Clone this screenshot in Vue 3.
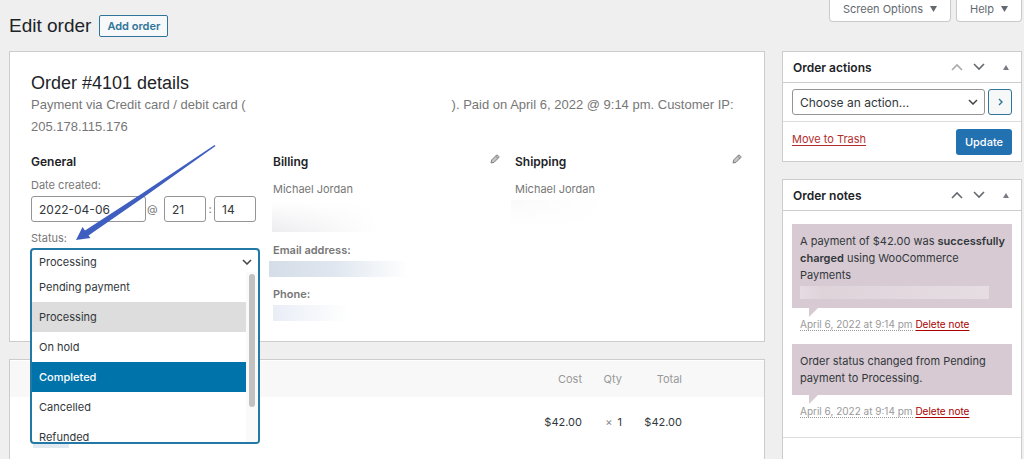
<script setup>
import { ref } from 'vue'

const statuses = ['Pending payment', 'Processing', 'On hold', 'Completed', 'Cancelled', 'Refunded']
const status = ref('Processing')
const highlighted = ref('Completed')
const date = ref('2022-04-06')
const hour = ref('21')
const minute = ref('14')
</script>

<template>
  <div class="page">
    <nav class="screen-meta" aria-label="Screen">
      <button type="button" class="meta-tab">Screen Options
        <svg width="7" height="6" viewBox="0 0 7 6"><path d="M0 0h7L3.500 6z" fill="currentColor" /></svg>
      </button>
      <button type="button" class="meta-tab">Help
        <svg width="7" height="6" viewBox="0 0 7 6"><path d="M0 0h7L3.500 6z" fill="currentColor" /></svg>
      </button>
    </nav>
    <div class="columns">
      <main class="main">
        <header class="page-head">
          <h1>Edit order</h1>
          <a href="#" class="add-order">Add order</a>
        </header>

        <section class="panel order">
          <h2>Order #4101 details</h2>
          <p class="payment">Payment via Credit card / debit card (<span class="redacted"></span>). Paid on April 6, 2022 @ 9:14 pm. Customer IP: 205.178.115.176</p>

          <div class="details">
            <div class="general">
              <h3>General</h3>
              <label class="field-label" for="order-date">Date created:</label>
              <div class="date-row">
                <input id="order-date" v-model="date" class="date">
                <span class="at">@</span>
                <input v-model="hour" class="time" aria-label="Hour">
                <span class="colon">:</span>
                <input v-model="minute" class="time" aria-label="Minute">
              </div>
              <label class="field-label status-label" for="order-status">Status:</label>
              <div class="status-slot">
                <div class="status-combo">
                  <div class="select-wrap">
                    <select id="order-status" v-model="status">
                      <option v-for="s in statuses" :key="s">{{ s }}</option>
                    </select>
                    <svg class="chevron" width="10" height="6" viewBox="0 0 10 6"><path d="M1 1l4 4 4-4" /></svg>
                  </div>
                  <div class="menu">
                    <ul role="listbox" aria-label="Status">
                      <li
                        v-for="s in statuses" :key="s" role="option"
                        :aria-selected="s === status"
                        :class="{ selected: s === status, highlighted: s === highlighted }"
                        @mouseenter="highlighted = s" @click="status = s"
                      >{{ s }}</li>
                    </ul>
                    <div class="track"><div class="thumb"></div></div>
                  </div>
                </div>
              </div>
            </div>

            <div class="address">
              <div class="address-head">
                <h3>Billing</h3>
                <a href="#" class="edit" aria-label="Edit billing">
                  <svg width="10" height="10" viewBox="0 0 10 10"><path d="M1 9l.6-3L6.300 1.300Q7 .6 7.700 1.300L8.700 2.300Q9.400 3 8.700 3.700L4 8.400z" fill="#c4c4c4" stroke="#777" stroke-width=".9" /><path d="M5.600 2L8 4.400" stroke="#777" stroke-width=".8" /></svg>
                </a>
              </div>
              <p class="name">Michael Jordan</p>
              <div class="blur blur-address"></div>
              <h4>Email address:</h4>
              <div class="blur blur-email"></div>
              <h4>Phone:</h4>
              <div class="blur blur-phone"></div>
            </div>

            <div class="address">
              <div class="address-head">
                <h3>Shipping</h3>
                <a href="#" class="edit" aria-label="Edit shipping">
                  <svg width="10" height="10" viewBox="0 0 10 10"><path d="M1 9l.6-3L6.300 1.300Q7 .6 7.700 1.300L8.700 2.300Q9.400 3 8.700 3.700L4 8.400z" fill="#c4c4c4" stroke="#777" stroke-width=".9" /><path d="M5.600 2L8 4.400" stroke="#777" stroke-width=".8" /></svg>
                </a>
              </div>
              <p class="name">Michael Jordan</p>
              <div class="blur blur-shipping"></div>
            </div>
          </div>

          <svg class="arrow" width="140" height="98" viewBox="0 0 140 98">
            <path d="M138.500 0L139.500 1L68 52L12.500 90.500L14.500 93L0 95L6.500 82L9 85.500L66 48.500z" fill="#3f5fc0" />
          </svg>
        </section>

        <section class="panel items">
          <table>
            <thead>
              <tr><th class="item"></th><th class="cost">Cost</th><th class="qty">Qty</th><th class="total">Total</th><th class="end"></th></tr>
            </thead>
            <tbody>
              <tr>
                <td class="item"><div class="item-name"></div></td>
                <td class="cost">$42.00</td>
                <td class="qty"><small>×</small> 1</td>
                <td class="total">$42.00</td>
                <td class="end"></td>
              </tr>
            </tbody>
          </table>
        </section>
      </main>

      <aside class="side">
        <section class="panel actions">
          <header class="box-head">
            <h2>Order actions</h2>
            <button type="button" class="handle faded" aria-label="Move up"><svg width="12" height="8" viewBox="0 0 12 8"><path d="M1 7l5-5 5 5" /></svg></button>
            <button type="button" class="handle" aria-label="Move down"><svg width="12" height="8" viewBox="0 0 12 8"><path d="M1 1l5 5 5-5" /></svg></button>
            <button type="button" class="handle toggle" aria-label="Toggle panel"><svg width="6" height="5" viewBox="0 0 6 5"><path d="M3 0l3 5H0z" /></svg></button>
          </header>
          <div class="action-row">
            <div class="select-wrap action-select">
              <select aria-label="Order action"><option>Choose an action...</option></select>
              <svg class="chevron" width="10" height="6" viewBox="0 0 10 6"><path d="M1 1l4 4 4-4" /></svg>
            </div>
            <button type="button" class="go" aria-label="Apply"><svg width="5" height="8" viewBox="0 0 5 8"><path d="M1 1l3 3-3 3" /></svg></button>
          </div>
          <footer class="action-foot">
            <a href="#" class="trash">Move to Trash</a>
            <button type="button" class="update">Update</button>
          </footer>
        </section>

        <section class="panel notes">
          <header class="box-head">
            <h2>Order notes</h2>
            <button type="button" class="handle" aria-label="Move up"><svg width="12" height="8" viewBox="0 0 12 8"><path d="M1 7l5-5 5 5" /></svg></button>
            <button type="button" class="handle" aria-label="Move down"><svg width="12" height="8" viewBox="0 0 12 8"><path d="M1 1l5 5 5-5" /></svg></button>
            <button type="button" class="handle toggle" aria-label="Toggle panel"><svg width="6" height="5" viewBox="0 0 6 5"><path d="M3 0l3 5H0z" /></svg></button>
          </header>
          <ul class="note-list">
            <li>
              <div class="note">
                <p>A payment of $42.00 was <strong>successfully charged</strong> using WooCommerce Payments</p>
                <div class="note-redacted"></div>
              </div>
              <p class="note-meta"><abbr>April 6, 2022 at 9:14 pm</abbr> <a href="#">Delete note</a></p>
            </li>
            <li>
              <div class="note"><p>Order status changed from Pending payment to Processing.</p></div>
              <p class="note-meta"><abbr>April 6, 2022 at 9:14 pm</abbr> <a href="#">Delete note</a></p>
            </li>
          </ul>
          <div class="add-note"></div>
        </section>
      </aside>
    </div>
  </div>
</template>

<style>
body { background: #efeff0; }
</style>

<style scoped>
* { box-sizing: border-box; }
.page {
  position: relative;
  min-height: 100vh;
  padding: 0 2px 0 9px;
  display: flex;
  font: 11px/17px Inter, "Liberation Sans", sans-serif;
  color: #32373c;
  background: #efeff0;
}
h1, h2, h3, h4, p, ul { margin: 0; padding: 0; }
ul { list-style: none; }
button, input, select { font: inherit; color: inherit; margin: 0; }
button { cursor: pointer; }
svg { display: block; fill: none; }

.screen-meta { position: absolute; top: 0; right: 2px; display: flex; gap: 5px; }
.meta-tab {
  display: flex;
  align-items: center;
  gap: 7px;
  height: 22px;
  padding: 0 13px 3px;
  border: 1px solid #c9cacd;
  border-top: 0;
  border-radius: 0 0 4px 4px;
  background: #fff;
  color: #646970;
  font-size: 11px;
}

.columns { flex: 1; display: grid; grid-template-columns: minmax(0, 1fr) 240px; gap: 17px; }
.main, .side { display: flex; flex-direction: column; }
.side { padding-top: 51px; }
.page-head { display: flex; align-items: center; gap: 8px; height: 51px; }
h1 { font: 400 19px/24px "Liberation Sans", Arial, sans-serif; color: #1d2327; }
.add-order {
  height: 22px;
  padding: 0 7px;
  border: 1px solid #2f7599;
  border-radius: 2px;
  background: #f7f8f9;
  color: #2f7599;
  font-weight: 600;
  line-height: 20px;
  text-decoration: none;
}
.panel { border: 1px solid #ccc; background: #fff; }

.order { position: relative; z-index: 1; padding: 20px 21px; margin-bottom: 17px; }
.order h2 { font: 400 18px/22px "Liberation Sans", Arial, sans-serif; color: #1d2327; }
.payment { font: 400 13px/22px "Liberation Sans", Arial, sans-serif; color: #777; }
.redacted { display: inline-block; width: 206px; }
.details { display: grid; grid-template-columns: repeat(3, minmax(0, 1fr)); gap: 14px; margin-top: 14px; }
h3 { font-size: 12px; line-height: 20px; font-weight: 600; color: #1d2327; }
.field-label { display: block; margin-top: 4px; line-height: 18px; color: #777; }
.date-row { display: flex; align-items: center; margin-top: 2px; color: #777; }
input {
  height: 26px;
  min-width: 0;
  padding: 0 7px;
  border: 1px solid #949494;
  border-radius: 3px;
  background: #fff;
  color: #32373c;
  font-size: 12px;
}
.date { flex: 1; }
.time { width: 42px; }
.at { width: 18px; padding-left: 1px; }
.colon { width: 8px; text-align: center; }
.general { padding-right: 3px; }
.status-label { margin-top: 7px; }
.status-slot { position: relative; height: 28px; margin-top: 1px; }
.status-combo {
  position: absolute;
  top: 0;
  left: -1px;
  right: -4px;
  overflow: hidden;
  border: 2px solid #2379a5;
  border-radius: 4px;
  background: #fff;
}
.select-wrap { position: relative; }
select { display: block; appearance: none; width: 100%; height: 24px; padding: 0 7px; border: 0; background: transparent; outline: 0; }
.chevron { position: absolute; right: 6px; top: 50%; margin-top: -3px; stroke: #444; stroke-width: 1.500; pointer-events: none; }
.menu { display: flex; height: 170px; margin-top: -2px; overflow: hidden; }
.menu ul { flex: 1; }
.menu li { height: 30px; padding: 0 7px; line-height: 30px; }
.menu .selected { background: #ddd; }
.menu .highlighted { background: #0073aa; color: #fff; font-weight: 500; }
.track { width: 12px; padding: 2px 3px; background: #fafafa; }
.thumb { height: 133px; border-radius: 4px; background: #c1c1c1; }

.address-head { display: flex; justify-content: space-between; }
.edit { padding: 2px 1px 0; }
.name { margin-top: 9px; line-height: 17px; color: #777; }
h4 { font-size: 11px; line-height: 17px; font-weight: 600; color: #777; }
.blur-address { width: 106px; height: 30px; margin: 4px 0 10px -1px; background: linear-gradient(90deg, transparent, #fff), linear-gradient(#fff, #ececef); }
.blur-email { width: 140px; height: 16px; margin: 2px 0 9px -4px; background: linear-gradient(90deg, #d5dde8, #dfe6ef 45%, #fff); }
.blur-phone { width: 76px; height: 16px; margin-top: 2px; background: linear-gradient(90deg, #e9edf6, #fff); }
.blur-shipping { width: 96px; height: 28px; margin: 2px 0 0 -4px; background: linear-gradient(90deg, transparent, #fff), linear-gradient(#fafafa, #fff); }
.arrow { position: absolute; left: 66px; top: 93px; pointer-events: none; }

.items { flex: 1; border-bottom: 0; padding-top: 1px; }
table { width: 100%; border-collapse: collapse; table-layout: fixed; }
th, td { padding: 0; text-align: right; }
th { height: 36px; background: #f8f8f8; color: #999; font-weight: 400; }
td { height: 51px; }
.cost { width: 60px; }
.qty { width: 40px; }
.total { width: 60px; }
.end { width: 82px; }
small { margin-right: 2px; color: #888; font-size: 11px; }
td.item { vertical-align: bottom; }
.item-name { width: 36px; height: 4px; margin-left: 23px; background: #e2eaf1; }

.box-head { display: flex; align-items: center; height: 31px; padding: 0 7px 0 10px; border-bottom: 1px solid #ccc; }
.box-head h2 { flex: 1; font-size: 12px; line-height: 17px; font-weight: 600; color: #1d2327; }
.handle { display: flex; justify-content: center; width: 22px; padding: 0; border: 0; background: none; }
.handle path { stroke: #646970; stroke-width: 1.600; }
.faded path { stroke: #a7aaad; }
.toggle { width: 16px; margin-left: 8px; }
.toggle path { stroke: none; fill: #787c82; }
.actions { margin-bottom: 17px; }
.action-row { display: flex; gap: 3px; padding: 6px 9px; border-bottom: 1px solid #ddd; }
.action-select { flex: 1; border: 1px solid #949494; border-radius: 3px; font-size: 12px; color: #32373c; }
.go { display: flex; align-items: center; justify-content: center; width: 24px; height: 26px; padding: 0; border: 1px solid #2f7599; border-radius: 3px; background: #f6f7f7; }
.go path { stroke: #2f7599; stroke-width: 1.400; }
.action-foot { display: flex; align-items: flex-start; justify-content: space-between; padding: 7px 9px 6px; }
.trash { margin-top: 2px; color: #b32d2e; text-underline-offset: 2px; }
.update { height: 26px; padding: 0 9px; border: 0; border-radius: 3px; background: #2271b1; color: #fff; font-size: 11px; font-weight: 500; }

.notes { flex: 1; border-bottom: 0; }
.note-list { padding: 13px 9px 0; }
.note { position: relative; padding: 9px 4px 8px 8px; background: #d7cad2; line-height: 17px; }
.note::after { content: ""; position: absolute; left: 17px; bottom: -9px; border-top: 9px solid #d7cad2; border-right: 9px solid transparent; }
.note-redacted { height: 13px; margin: 2px 19px 1px 0; background: linear-gradient(90deg, #e6dbe2, #dfd3da 12%, #e6dde3); }
strong { font-weight: 600; }
.note-meta { padding: 8px 8px 11px; color: #999; font-size: 10px; }
abbr { border-bottom: 1px dotted #999; }
.note-meta a { color: #a00; text-underline-offset: 2px; }
.add-note { border-top: 1px solid #ddd; margin-top: 6px; }
</style>
